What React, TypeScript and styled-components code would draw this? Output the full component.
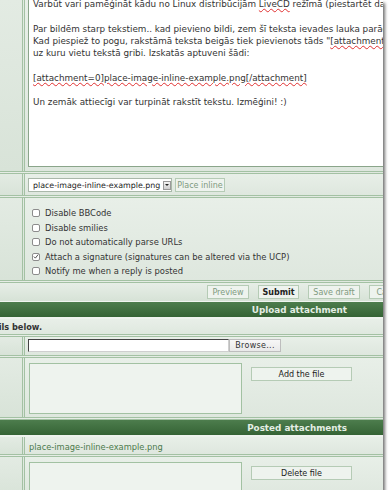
import React from "react";
import styled, { createGlobalStyle } from "styled-components";

const GlobalStyle = createGlobalStyle`
  html, body {
    margin: 0;
    padding: 0;
    background: #ffffff;
  }
  body {
    font-family: "DejaVu Sans", Verdana, sans-serif;
    font-size: 8.8px;
    color: #333;
  }
`;

const LINE = "#a3c1a3";

const Panel = styled.div`
  width: 383px;
  height: 490px;
  overflow: hidden;
  background: linear-gradient(90deg, #e6ede6 0%, #dfe8df 100%);
  box-shadow: 2px 3px 3px rgba(0, 0, 0, 0.55);
  display: flex;
  flex-direction: column;
`;

const Row = styled.div<{ $h: number; $last?: boolean }>`
  display: flex;
  flex: none;
  height: ${({ $h }) => $h}px;
  border-bottom: ${({ $last }) => ($last ? "none" : `3px double ${LINE}`)};
`;

const LeftCell = styled.div`
  width: 22px;
  flex: none;
  background: linear-gradient(180deg, #e3ebe3, #d8e3d8);
  border-right: 3px double ${LINE};
`;

const Cell = styled.div<{ $pad?: string }>`
  flex: 1;
  min-width: 0;
  display: flex;
  align-items: flex-start;
  padding: ${({ $pad }) => $pad ?? "0 0 0 3px"};
  background: linear-gradient(180deg, #e8efe8, #dee7de);
`;

const Editor = styled.div`
  width: 420px;
  height: 168px;
  margin-top: -3px;
  flex: none;
  background: #ffffff;
  border: 1px solid #8aa58a;
  border-right: none;
  padding: 0 0 0 4px;
  line-height: 12.3px;
  white-space: pre;
  color: #333;
  overflow: hidden;
`;

const Typo = styled.span`
  text-decoration: underline wavy #e03030;
  text-decoration-thickness: 1px;
  text-underline-offset: 1px;
`;

const Select = styled.div`
  margin-top: 4px;
  width: 144px;
  height: 14px;
  background: #ffffff;
  border: 1px solid #a9b8a9;
  display: flex;
  align-items: center;
  justify-content: space-between;
  padding-left: 4px;
  box-sizing: border-box;
  color: #222;
  font-size: 7.9px;
  white-space: nowrap;
  overflow: hidden;
`;

const Arrow = styled.span`
  width: 8px;
  height: 9px;
  flex: none;
  margin: 0 2px 0 3px;
  background: linear-gradient(#f4f4f4, #cfcfcf);
  border: 1px solid #9a9a9a;
  box-sizing: border-box;
  display: flex;
  align-items: center;
  justify-content: center;
  &::after {
    content: "";
    border-left: 2px solid transparent;
    border-right: 2px solid transparent;
    border-top: 2px solid #222;
  }
`;

const Button = styled.div<{ $w: number; $bold?: boolean; $muted?: boolean }>`
  width: ${({ $w }) => $w}px;
  height: 14px;
  box-sizing: border-box;
  flex: none;
  display: flex;
  align-items: center;
  justify-content: center;
  background: #eef3ee;
  border: 1px solid #b5cbb5;
  color: ${({ $muted }) => ($muted ? "#7f9a7f" : "#222")};
  font-weight: ${({ $bold }) => ($bold ? "bold" : "normal")};
  font-size: 8px;
  white-space: nowrap;
`;

const Options = styled.div`
  display: flex;
  flex-direction: column;
  padding: 8px 0 0 7px;
`;

const Option = styled.label`
  display: flex;
  align-items: center;
  height: 14.5px;
  gap: 5px;
  color: #333;
  font-size: 8.4px;
  white-space: nowrap;
`;

const Box = styled.span`
  width: 8px;
  height: 8px;
  box-sizing: border-box;
  border: 1px solid #8c8c8c;
  border-radius: 2px;
  background: #ffffff;
  display: flex;
  align-items: center;
  justify-content: center;
`;

const ButtonBar = styled.div`
  height: 18px;
  flex: none;
  display: flex;
  align-items: center;
  gap: 9px;
  padding-left: 207px;
  background: linear-gradient(180deg, #e7eee7, #d6e2d6);
  border-bottom: 1px solid #f0f5f0;
`;

const Header = styled.div`
  height: 15px;
  flex: none;
  display: flex;
  align-items: center;
  justify-content: flex-end;
  padding-right: 36px;
  background: linear-gradient(180deg, #4d7d4d, #356335);
  color: #e4eee4;
  font-weight: bold;
  border-bottom: 2px solid #eef3ee;
`;

const Note = styled.div`
  height: 15px;
  flex: none;
  display: flex;
  align-items: center;
  border-bottom: 3px double ${LINE};
  background: linear-gradient(180deg, #e8efe8, #dfe8df);
`;

const NoteClip = styled.span`
  width: 42px;
  display: flex;
  justify-content: flex-end;
  overflow: hidden;
  white-space: nowrap;
  font-weight: bold;
  font-size: 8.2px;
  color: #333;
`;

const FileInput = styled.div`
  margin-top: 2px;
  width: 201px;
  height: 13px;
  box-sizing: border-box;
  background: #ffffff;
  border: 1px solid #cfcfcf;
  border-top-color: #444;
  border-left-color: #444;
`;

const Browse = styled.div`
  margin-top: 2px;
  width: 52px;
  height: 13px;
  box-sizing: border-box;
  display: flex;
  align-items: center;
  justify-content: center;
  background: linear-gradient(#f7f7f7, #e9e9e9);
  border: 1px solid #bdbdbd;
  color: #333;
  font-size: 8px;
  letter-spacing: 0.3px;
`;

const Comment = styled.div<{ $h: number }>`
  position: relative;
  width: 213px;
  height: ${({ $h }) => $h}px;
  box-sizing: border-box;
  flex: none;
  margin: 5px 9px 0 1px;
  background: #eef3ee;
  border: 1px solid #a2c1a2;
`;

const Grip = styled.span`
  position: absolute;
  right: 1px;
  bottom: 1px;
  width: 6px;
  height: 6px;
  background: radial-gradient(circle, #b0b0b0 0.6px, transparent 0.7px) 0 0 / 2px 2px;
  clip-path: polygon(100% 0, 100% 100%, 0 100%);
`;

const FileName = styled.span`
  margin-top: 5px;
  padding-left: 1px;
  font-size: 8.3px;
  color: #4c7a4c;
`;

const Check = () => (
  <svg width="7" height="7" viewBox="0 0 7 7">
    <path d="M1 3.6 L2.8 5.4 L6 1.2" fill="none" stroke="#333" strokeWidth="1" />
  </svg>
);

const options: { label: string; checked?: boolean }[] = [
  { label: "Disable BBCode" },
  { label: "Disable smilies" },
  { label: "Do not automatically parse URLs" },
  { label: "Attach a signature (signatures can be altered via the UCP)", checked: true },
  { label: "Notify me when a reply is posted" },
];

export default function App() {
  return (
    <>
      <GlobalStyle />
      <Panel>
        <Row $h={171}>
          <LeftCell />
          <Cell>
            <Editor>
              {"Varbūt vari pamēģināt kādu no Linux distribūcijām "}
              <Typo>LiveCD</Typo>
              {" režīmā (piestartēt datoru no diska)\n\n"}
              {"Par bildēm starp tekstiem.. kad pievieno bildi, zem šī teksta ievades lauka parādās poga\n"}
              {'Kad piespiež to pogu, rakstāmā teksta beigās tiek pievienots tāds "'}
              <Typo>[attachment=0]</Typo>
              {"\n"}
              {"uz kuru vietu tekstā gribi. Izskatās aptuveni šādi:\n\n"}
              <Typo>[attachment=0]place-image-inline-example.png[/attachment]</Typo>
              {"\n\n"}
              {"Un zemāk attiecīgi var turpināt rakstīt tekstu. Izmēģini! :)"}
            </Editor>
          </Cell>
        </Row>
        <Row $h={21}>
          <LeftCell />
          <Cell>
            <Select>
              place-image-inline-example.png
              <Arrow />
            </Select>
            <Button $w={50} $muted style={{ marginTop: 4, marginLeft: 3 }}>
              Place inline
            </Button>
          </Cell>
        </Row>
        <Row $h={82}>
          <LeftCell />
          <Cell $pad="0">
            <Options>
              {options.map((o) => (
                <Option key={o.label}>
                  <Box>{o.checked && <Check />}</Box>
                  {o.label}
                </Option>
              ))}
            </Options>
          </Cell>
        </Row>
        <ButtonBar>
          <Button $w={42} $muted>Preview</Button>
          <Button $w={41} $bold>Submit</Button>
          <Button $w={52} $muted>Save draft</Button>
          <Button $w={42} $muted>Cancel</Button>
        </ButtonBar>
        <Header>Upload attachment</Header>
        <Note>
          <NoteClip>Please add the file details below.</NoteClip>
        </Note>
        <Row $h={18}>
          <LeftCell />
          <Cell>
            <FileInput />
            <Browse>Browse...</Browse>
          </Cell>
        </Row>
        <Row $h={59}>
          <LeftCell />
          <Cell>
            <Comment $h={51}>
              <Grip />
            </Comment>
            <Button $w={101} style={{ marginTop: 9 }}>Add the file</Button>
          </Cell>
        </Row>
        <Header>Posted attachments</Header>
        <Row $h={17}>
          <LeftCell />
          <Cell>
            <FileName>place-image-inline-example.png</FileName>
          </Cell>
        </Row>
        <Row $h={40} $last>
          <LeftCell />
          <Cell>
            <Comment $h={60} />
            <Button $w={101} style={{ marginTop: 9 }}>Delete file</Button>
          </Cell>
        </Row>
      </Panel>
    </>
  );
}
